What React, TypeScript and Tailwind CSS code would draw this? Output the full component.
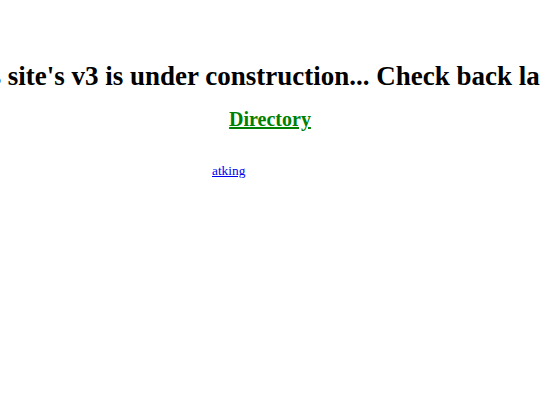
export default function App() {
  return (
    <div className="w-[540px] h-[405px] overflow-hidden bg-white text-black" style={{ fontFamily: '"Liberation Serif", serif' }}>
      <div className="pt-[60px] overflow-hidden">
        <h1 className="text-[27px] font-bold whitespace-nowrap leading-[32px] ml-[-50px]">
          This site's v3 is under construction... Check back later!
        </h1>
      </div>
      <div className="flex justify-center mt-[12px]">
        <a href="#" className="text-[20px] font-bold text-[#008000] underline leading-[30px]">Directory</a>
      </div>
      <div className="pl-[212px] mt-[24px]">
        <a href="#" className="text-[13.33px] text-[#0000ee] underline leading-[18px]">atking</a>
      </div>
    </div>
  );
}
